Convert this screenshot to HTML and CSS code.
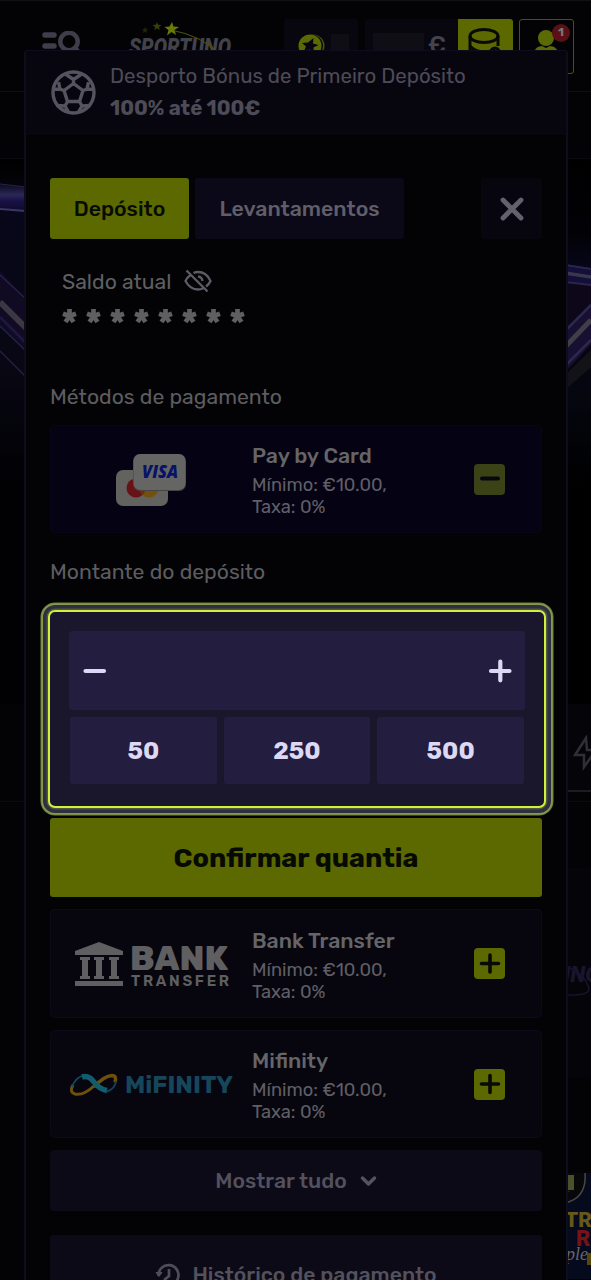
FILE: index.html
```html
<!DOCTYPE html>
<html lang="pt">
<head>
<meta charset="utf-8">
<title>Depósito</title>
<link rel="stylesheet" href="styles.css">
</head>
<body>
<div class="page">
  <div class="site">
    <header class="topbar">
      <svg class="menu-icon" width="42" height="28" viewBox="0 0 42 28" fill="none" stroke="#3f3d4a" stroke-linecap="round">
        <path d="M4 4H13M4 15H13M4 26H17" stroke-width="5.500"/><circle cx="28" cy="10.500" r="8.700" stroke-width="4.500"/><path d="M34 17l5 6" stroke-width="5"/>
      </svg>
      <svg class="brand" width="110" height="40" viewBox="0 0 110 40">
        <text x="1" y="33" class="brand-text" textLength="102" lengthAdjust="spacingAndGlyphs">SPORTUNO</text>
        <path d="M47 9Q70 13 90 30" fill="none" stroke="#4a5307" stroke-width="1.200"/>
        <path d="M44 0l1.500 4.500 5.500.5-4.500 3 1.500 5-4.500-3-4.500 3.500 1.500-5.500-4-3 5-.5z" fill="#6b7a05"/>
        <path d="M29 0l1 2.800 3.500.2-2.600 2 1 3-2.900-1.800-2.800 2 1-3.200-2.800-2 3.400-.2z" fill="#384004"/>
        <path d="M17 5l1 2 2 .2-1.500 1.500.5 2.300-2-1.200-2 1.200.5-2.300-1.500-1.500 2-.2z" fill="#202503"/>
      </svg>
      <div class="account">
        <div class="box coins">
          <svg width="27" height="27" viewBox="0 0 27 27"><circle cx="15" cy="12" r="11.500" fill="#4b5605"/><circle cx="13.500" cy="12" r="11.500" fill="#08070f"/><circle cx="12" cy="12" r="11.500" fill="#5c6a03"/><path d="M15.500 4l-.5 5.500 5.500 1.500-5 2.500.5 6-4.500-4-6 2.500 2.500-5.500-4-3.500 6-.5z" fill="#08070f"/></svg>
          <i class="smudge small"></i>
        </div>
        <div class="box balance"><i class="smudge"></i><span>€</span></div>
        <div class="box wallet">
          <svg width="36" height="36" viewBox="0 0 36 36" fill="none" stroke="#080a02" stroke-width="3"><ellipse cx="17" cy="8" rx="14" ry="6.500"/><path d="M3 8v18M31 8v10M3 18q5 6 14 6 7 0 11-4"/><circle cx="28" cy="24" r="4"/></svg>
        </div>
        <div class="box user">
          <svg width="30" height="32" viewBox="0 0 30 32" fill="#5c6a03"><circle cx="15" cy="8" r="8"/><path d="M3 30V22q2-6 8-6l4 2 4-2q6 0 8 6v8z"/></svg>
          <b class="badge">1</b>
        </div>
      </div>
    </header>
    <div class="subbar"></div>
    <div class="hero">
      <svg width="26" height="545" viewBox="0 0 26 545">
        <defs><linearGradient id="l" x2="0" y2="1"><stop offset="0" stop-color="#000"/><stop offset=".04" stop-color="#030308"/><stop offset=".1" stop-color="#08071a"/><stop offset=".38" stop-color="#080713"/><stop offset=".6" stop-color="#010103"/></linearGradient>
        <linearGradient id="band" x2="0" y2="1"><stop offset="0" stop-color="#0a081c"/><stop offset=".4" stop-color="#2b2757"/><stop offset=".65" stop-color="#181044"/><stop offset="1" stop-color="#0e0b2a"/></linearGradient></defs>
        <path d="M0 0h26v545H0z" fill="url(#l)"/>
        <path d="M0 25l26 3v24l-26-2z" fill="url(#band)"/>
        <path d="M0 50l26 2" stroke="#3b3667" stroke-width="2"/><path d="M0 25l26 3" stroke="#262347"/>
        <path d="M0 112l26 28v52L0 166z" fill="#100a22"/>
        <path d="M0 116l26 24M0 167l26 25M0 192l26 26" stroke="#25214a" stroke-width="1.300"/>
        <path d="M0 143l26 26" stroke="#3b3844" stroke-width="6"/><path d="M0 158l26 26" stroke="#1e1642" stroke-width="3"/>
      </svg>
      <svg width="26" height="545" viewBox="0 0 26 545">
        <defs><linearGradient id="r" x2="0" y2="1"><stop offset="0" stop-color="#000"/><stop offset=".14" stop-color="#020207"/><stop offset=".2" stop-color="#07061a"/><stop offset=".45" stop-color="#05060e"/><stop offset=".6" stop-color="#000"/></linearGradient></defs>
        <path d="M0 0h26v545H0z" fill="url(#r)"/>
        <path d="M0 105l26 4v75L0 213z" fill="#0e0719"/>
        <path d="M0 105l26 4v17l-26-3z" fill="#130e3a"/>
        <path d="M0 114l26 4" stroke="#3a374b" stroke-width="3.500"/><path d="M0 106l26 4M0 123l26 3" stroke="#2a2647" stroke-width="2"/>
        <path d="M0 170l26-25v40L0 213z" fill="#181032"/>
        <path d="M0 188l26-27" stroke="#403e47" stroke-width="5"/><path d="M0 172l26-26M0 207l26-26" stroke="#2d294b" stroke-width="2.500"/>
        <path d="M0 216l26-25v17L0 231z" fill="#131317"/>
      </svg>
    </div>
    <div class="cats">
      <svg width="24" height="36" viewBox="0 0 24 36" fill="none" stroke="#302f38" stroke-width="2.500" stroke-linejoin="miter"><path d="M13 3L2 20h9v12l12-17h-9z"/></svg>
    </div>
    <div class="rule"></div>
    <div class="provider">
      <svg width="26" height="40" viewBox="0 0 26 40"><text x="-9" y="26" class="uno">UNO</text><path d="M0 10Q20 17 24 33Q24 40 0 39" fill="none" stroke="#17142d" stroke-width="1.500"/></svg>
    </div>
    <div class="game">
      <svg width="26" height="106" viewBox="0 0 26 106">
        <path d="M0 0h26v106H0z" fill="#050a1c"/>
        <path d="M0 0h20q2 25-20 30z" fill="#08080a"/><path d="M20 0q2 25-20 30" fill="none" stroke="#484845" stroke-width="1.500"/>
        <path d="M0 2h9v15H0z" fill="#4b5129"/><text x="-6" y="14" class="g-badge">B</text><path d="M0 18h5l-5 4z" fill="#5a1013"/>
        <text x="0" y="54" class="g-title">TR</text><text x="11" y="73" class="g-red">R</text><text x="1" y="87" class="g-script">ple</text><path d="M22 80h4v12h-4z" fill="#55480e"/>
      </svg>
    </div>
  </div>

  <div class="modal">
    <div class="bonus">
      <svg width="45" height="45" viewBox="0 0 45 45" fill="none" stroke="#55535f" stroke-width="3.400" stroke-linejoin="round">
        <circle cx="22.500" cy="22.500" r="20.500"/><path d="M22.500 13.500l9.500 7-3.500 11h-12L13 20.500zM22.500 13.500V9.500M15 4.500l7.500 5 7.500-5M32 20.500l4-1.300 6.500 0M36 19.200l1.500-7M28.500 31.500l2.500 4.500-3.500 6M31 36l8.500-.500M16.500 31.500L14 36l3.500 6M14 36l-8.500-.500M13 20.500l-4-1.300-6.500 0M9 19.200l-1.500-7"/>
      </svg>
      <div class="bonus-copy"><p class="t1">Desporto Bónus de Primeiro Depósito</p><p class="t2">100% até 100€</p></div>
    </div>
    <div class="content">
      <div class="tabs">
        <button class="tab active">Depósito</button>
        <button class="tab">Levantamentos</button>
        <button class="close"><svg width="24" height="24" viewBox="0 0 24 24" stroke="#63616c" stroke-width="4.800" stroke-linecap="round"><path d="M3 3l18 18M21 3L3 21"/></svg></button>
      </div>
      <div class="saldo">
        <span>Saldo atual</span>
        <svg width="28" height="24" viewBox="0 0 28 24" fill="none" stroke="#5d5c65" stroke-width="2.300"><path d="M6.500 6Q3 8.500 1.500 12Q6 20.500 14 20.500q2.500 0 5-1M9.500 4q2-1 4.500-1 8.500 0 12.500 9-1.500 3.500-4.500 5.500M14 7.500q4 .5 4.500 4.500M2.500 1.500l21 21"/></svg>
      </div>
      <div class="stars"><svg width="192" height="20" viewBox="0 0 192 20"><defs><path id="ast" d="M0-7V0M0 0l6.500-2.300M0 0l4 6M0 0l-4 6M0 0l-6.500-2.300" stroke="#5f5f61" stroke-width="4.700"/></defs><use href="#ast" x="7.500" y="10"/><use href="#ast" x="31.500" y="10"/><use href="#ast" x="55.500" y="10"/><use href="#ast" x="79.500" y="10"/><use href="#ast" x="103.500" y="10"/><use href="#ast" x="127.500" y="10"/><use href="#ast" x="151.500" y="10"/><use href="#ast" x="175.500" y="10"/></svg></div>
      <h2 class="label methods">Métodos de pagamento</h2>
      <div class="method selected">
        <div class="logo">
          <svg width="70" height="52" viewBox="0 0 70 52"><rect y="16" width="52" height="36" rx="7" fill="#62625f"/><circle cx="20" cy="34" r="9.500" fill="#681116"/><circle cx="33" cy="34" r="9.500" fill="#74500c"/><path d="M26.500 27a9.500 9.500 0 0 1 0 14 9.500 9.500 0 0 1 0-14" fill="#6b2e0c"/><rect x="17" y="0" width="53" height="37" rx="7" fill="#454544"/><rect x="17.500" width="52" height="36" rx="7" fill="#656563"/><text x="26" y="24" class="visa" textLength="36" lengthAdjust="spacingAndGlyphs">VISA</text></svg>
        </div>
        <div class="info"><h3>Pay by Card</h3><p class="min">Mínimo: €10.00,</p><p>Taxa: 0%</p></div>
        <button class="toggle minus"><svg width="22" height="22" viewBox="0 0 22 22" stroke="#070711" stroke-width="4" stroke-linecap="round"><path d="M3 10.500h16"/></svg></button>
      </div>
      <h2 class="label amount-label">Montante do depósito</h2>
      <div class="focus">
        <div class="stepper">
          <svg width="24" height="24" viewBox="0 0 24 24" stroke="#dcd7f3" stroke-width="4.200" stroke-linecap="round"><path d="M2.500 12h18.500"/></svg>
          <svg width="24" height="24" viewBox="0 0 24 24" stroke="#dcd7f3" stroke-width="4.200" stroke-linecap="round"><path d="M3 12h18.500M12.300 2.700v18.600"/></svg>
        </div>
        <div class="presets"><button>50</button><button>250</button><button>500</button></div>
      </div>
      <button class="confirm"><span>Confirmar quantia</span></button>
      <div class="method bank">
        <div class="logo">
          <svg width="156" height="46" viewBox="0 0 156 46" fill="#5f5f61"><path d="M0 9L24 0l24 9v4H0zM0 39h48v5H0zM5 15h10v3h-2v16h2v3H5v-3h2V18H5zM19 15h10v3h-2v16h2v3H19v-3h2V18h-2zM34 15h10v3h-2v16h2v3H34v-3h2V18h-2z"/><text x="55" y="28" class="bank-a" textLength="98" lengthAdjust="spacingAndGlyphs">BANK</text><text x="56" y="44" class="bank-b" textLength="98">TRANSFER</text></svg>
        </div>
        <div class="info"><h3>Bank Transfer</h3><p class="min">Mínimo: €10.00,</p><p>Taxa: 0%</p></div>
        <button class="toggle"><svg width="22" height="22" viewBox="0 0 22 22" stroke="#080a05" stroke-width="3.600" stroke-linecap="round"><path d="M2.500 10.500h17M11 2v17"/></svg></button>
      </div>
      <div class="method mifinity">
        <div class="logo">
          <svg width="164" height="26" viewBox="0 0 164 26" fill="none"><path d="M24 15Q34 4 42 3.500q5 0 3 7" stroke="#6d500b" stroke-width="3.500"/><path d="M24 14Q13 24 5 22Q-1 20 3 13" stroke="#6d500b" stroke-width="3"/><path d="M2 15Q6 4 15 3.500" stroke="#10506a" stroke-width="1.500"/><path d="M46 9q-1 8-9 10.500" stroke="#10405a" stroke-width="2"/><path d="M12 5Q19 3 24 10Q29 17 37 18.500" stroke="#125c70" stroke-width="5.500"/><text x="55" y="21" class="mif" textLength="108" lengthAdjust="spacingAndGlyphs">MiFINITY</text></svg>
        </div>
        <div class="info"><h3>Mifinity</h3><p class="min">Mínimo: €10.00,</p><p>Taxa: 0%</p></div>
        <button class="toggle"><svg width="22" height="22" viewBox="0 0 22 22" stroke="#080a05" stroke-width="3.600" stroke-linecap="round"><path d="M2.500 11h17M11 2.500v17"/></svg></button>
      </div>
      <button class="wide"><span>Mostrar tudo</span><svg width="17" height="12" viewBox="0 0 17 12" fill="none" stroke="#55535f" stroke-width="3.500" stroke-linecap="round" stroke-linejoin="round"><path d="M2.500 3l6 6 6-6"/></svg></button>
      <button class="wide history"><svg width="25" height="26" viewBox="0 0 25 26" fill="none" stroke="#4f4d5a" stroke-width="2.700"><path d="M3.500 14A10 10 0 1 1 8 21.500M14 7v7l-5 4"/><path d="M1 10.500h6l-3 4z" fill="#4f4d5a" stroke-width="1"/></svg><span>Histórico de pagamento</span></button>
    </div>
  </div>
</div>
</body>
</html>
```

FILE: styles.css
```css
* { box-sizing: border-box; }
body { margin: 0; background: #030306; font-family: Rubik, Roboto, sans-serif; }
p, h2, h3 { margin: 0; font-weight: 400; white-space: nowrap; }
button { border: 0; padding: 0; font: inherit; color: inherit; white-space: nowrap; }
svg { display: block; flex: none; }
.page { position: relative; width: 591px; height: 1280px; overflow: hidden; background: #030306; }
.site { display: flex; flex-direction: column; height: 1280px; }

.topbar { display: flex; align-items: flex-start; height: 92px; flex: none; padding: 0 17px 0 41px; border-top: 1px solid #111114; border-bottom: 1px solid #0e0c1b; }
.menu-icon { margin-top: 30px; }
.brand { margin: 21px 0 0 45px; overflow: visible; }
.brand-text { font: italic 900 23px Roboto, sans-serif; fill: #42424b; }
.account { display: flex; margin: 18px 0 0 auto; }
.box { height: 55px; background: #08070f; border-radius: 3px; }
.coins { width: 74px; margin-right: 7px; display: flex; gap: 6px; padding: 15px 0 0 14px; }
.smudge { width: 51px; height: 24px; background: #0f0e14; }
.smudge.small { width: 18px; }
.balance { width: 93px; display: flex; justify-content: flex-end; gap: 4px; padding: 14px 12px 0 0; border-radius: 3px 0 0 3px; font-size: 24px; font-weight: 500; line-height: 25px; color: #44424e; }
.wallet { width: 55px; padding: 9px 0 0 9px; background: #5b6900; border-radius: 0 3px 3px 0; }
.user { position: relative; width: 55px; margin-left: 6px; padding: 10px 0 0 11px; background: #030306; border: 1px solid #4a5503; }
.badge { position: absolute; top: 4px; right: 3px; width: 18px; height: 18px; border-radius: 50%; background: #5a1015; color: #777; font-size: 12px; line-height: 16px; text-align: center; }
.subbar { height: 67px; flex: none; border-bottom: 1px solid #09090e; }
.hero { display: flex; justify-content: space-between; height: 545px; flex: none; background: #000; }
.cats { display: flex; justify-content: flex-end; align-self: flex-end; width: 26px; height: 88px; flex: none; padding-top: 31px; overflow: hidden; background: #050409; border-bottom: 2px solid #1d1c22; }
.cats svg { margin-right: -6px; }
.rule { height: 10px; flex: none; border-bottom: 1px solid #0a0914; }
.provider { align-self: flex-end; width: 26px; height: 209px; flex: none; margin-top: 66px; padding-top: 88px; background: #050409; overflow: hidden; }
.uno { font: italic 900 22px Roboto, sans-serif; fill: #18152f; }
.game { align-self: flex-end; width: 26px; margin-top: 96px; }
.g-badge { font: 700 15px Roboto, sans-serif; fill: #0a0b08; }
.g-title { font: 900 21px Roboto, sans-serif; fill: #665819; }
.g-red { font: 900 22px Roboto, sans-serif; fill: #751318; }
.g-script { font: italic 18px "Liberation Serif", serif; fill: #66676d; }

.modal { position: absolute; left: 24px; top: 50px; width: 544px; height: 1260px; background: #030306; border: 2px solid #0f0c1e; border-top-width: 1px; border-radius: 4px 4px 0 0; }
.bonus { display: flex; align-items: center; height: 83px; padding-left: 25px; gap: 14px; background: #07060f; border-bottom: 1px solid #0b0915; color: #4d4b57; }
.t1 { font-size: 20.45px; line-height: 24px; }
.t2 { margin-top: 8px; font-size: 20.4px; font-weight: 700; line-height: 24px; }
.content { display: flex; flex-direction: column; padding: 44px 24px 0; }
.tabs { display: flex; gap: 6px; height: 61px; font-size: 21.3px; font-weight: 500; }
.tab { width: 209px; background: #0b0917; color: #605e69; border-radius: 3px; }
.tab.active { width: 139px; background: #5b6900; color: #080b02; }
.close { display: flex; align-items: center; justify-content: center; width: 61px; margin-left: auto; background: #07060f; border-radius: 3px; }
.saldo { display: flex; align-items: center; gap: 13px; height: 24px; margin: 30px 0 0 12px; font-size: 21.2px; color: #5f5f62; }
.stars { height: 20px; margin: 13px 0 0 12px; }
.label { height: 24px; font-size: 21.2px; line-height: 24px; color: #5d5d60; }
.methods { margin-top: 59px; }
.amount-label { margin-top: 27px; }
.method { display: flex; align-items: center; height: 109px; background: #07060f; border: 1px solid #0c0a18; border-radius: 4px; }
.method.selected { height: 108px; margin-top: 16px; background: #050214; border-color: #070518; }
.logo { width: 201px; display: flex; justify-content: center; flex: none; }
.selected .logo { padding: 1px 2px 0 0; }
.bank .logo { padding: 2px 0 0 2px; }
.mifinity .logo { padding-top: 2px; }
.info { width: 222px; flex: none; padding-top: 2px; color: #605f66; }
.info h3 { font-size: 21.3px; font-weight: 500; line-height: 25px; color: #656568; }
.info p { font-size: 18.3px; line-height: 22px; }
.info .min { margin-top: 6px; }
.toggle { width: 31px; height: 31px; display: flex; align-items: center; justify-content: center; background: #5b6900; border-radius: 4px; }
.toggle.minus { background: #3b4215; }
.visa { font: italic 900 17px "Open Sans", sans-serif; fill: #071269; }
.bank-a { font: 800 33px Rubik, sans-serif; }
.bank-b { font: 600 15px Rubik, sans-serif; }
.mif { font: 700 24px Rubik, sans-serif; fill: #16465c; }

.focus { align-self: center; width: 498px; height: 198px; margin: 26px 0 0 2px; padding: 19px 19px 0; background: #1a162b; border: 2px solid #d2ef3c; border-radius: 7px; box-shadow: 0 0 0 1.500px #4e5740, 0 0 0 5px #2e2f41, 0 0 0 6.500px #87994e, 0 0 0 7.500px #718239; }
.stepper { display: flex; justify-content: space-between; align-items: center; height: 79px; padding: 0 13px 0 14px; background: #231d3f; border-radius: 3px; }
.presets { display: grid; grid-template-columns: repeat(3, 1fr); gap: 7px; height: 67px; margin: 7px 1px 0; }
.presets button { background: #231d3f; color: #ddd8f3; border-radius: 2px; font-size: 24px; font-weight: 700; }
.confirm { height: 79px; margin: 10px 0 12px; background: #5b6900; color: #070a03; border-radius: 3px; font-size: 27px; font-weight: 700; }
.bank .info { padding-top: 3px; }
.mifinity { margin: 12px 0; height: 108px; }
.wide { display: flex; align-items: center; justify-content: center; gap: 13px; height: 61px; background: #0c0a17; color: #53515d; border-radius: 4px; font-size: 21.2px; font-weight: 500; }
.history { height: 79px; margin-top: 24px; gap: 12px; }
```
